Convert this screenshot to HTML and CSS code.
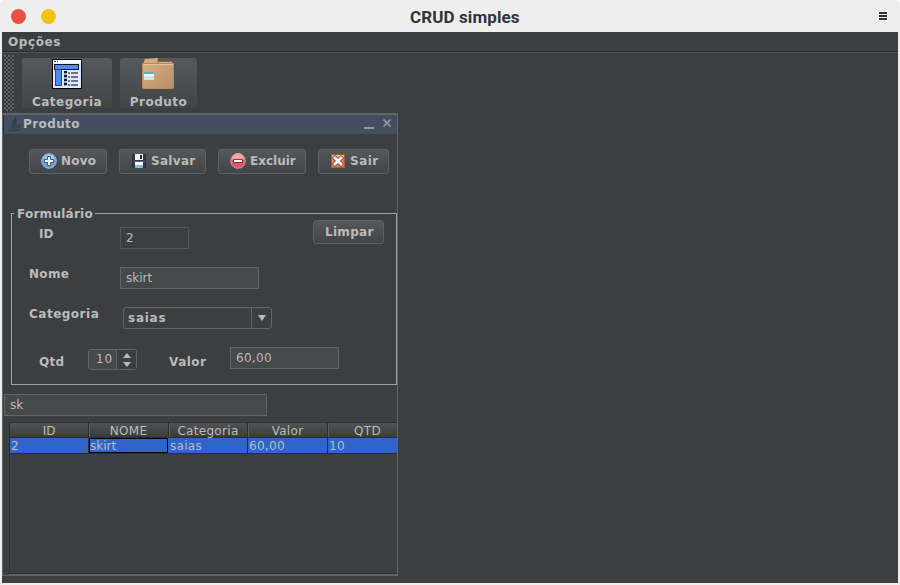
FILE: index.html
```html
<!DOCTYPE html>
<html lang="pt-BR">
<head>
<meta charset="utf-8">
<title>CRUD simples</title>
<link rel="stylesheet" href="styles.css">
</head>
<body>
<div class="window">
  <header class="titlebar">
    <span class="dot red"></span><span class="dot yellow"></span>
    <h1>CRUD simples</h1>
    <svg class="burger" width="9" height="8" viewBox="0 0 9 8"><path d="M0 0h8v2H0zM0 3h8v2H0zM0 6h8v2H0z" fill="#2f343a"/></svg>
  </header>
  <div class="client">
    <nav class="menubar"><span>Opções</span></nav>
    <div class="toolbar">
      <span class="grip"></span>
      <button class="tool cat">
        <svg width="30" height="30" viewBox="0 0 30 30" shape-rendering="crispEdges"><rect x=".5" y=".5" width="29" height="29" fill="#deebfc" stroke="#000"/><path d="M1 1h28v3H1z" fill="#f4f8ff"/><path d="M2 2h2v1H2zM5 2h1v1H5z" fill="#333"/><path d="M2.500 5.500h24v5h-24z" fill="#5089fa" stroke="#07122d"/><path d="M3.500 10.500h6v16h-6z" fill="#5089fa" stroke="#25477f"/><path d="M12 12h3v15h-3z" fill="#9aa8c0"/><path d="M12 12h3v2h-3zM12 16h3v2h-3zM12 20h3v2h-3zM12 24h3v2h-3z" fill="#101828"/><path d="M16 13h2v2h-2zM16 17h2v2h-2zM16 21h2v2h-2zM16 25h2v2h-2zM19 13h7v2h-7zM19 17h7v2h-7zM19 21h7v2h-7zM19 25h7v2h-7z" fill="#6d7584"/></svg>
        <span>Categoria</span>
      </button>
      <button class="tool prod">
        <svg width="32" height="32" viewBox="0 0 32 32"><defs><linearGradient id="box" x2="1" y2="1"><stop stop-color="#d9ad83"/><stop offset="1" stop-color="#b98f68"/></linearGradient></defs><path d="M1 6 3 1l13-1v3h13l2 3z" fill="#d6ab82"/><path d="M16 .5v4M16 3.500h13" fill="none" stroke="#8a6344"/><path d="M.5 5.500h31v24q0 1-1 1h-29q-1 0-1-1z" fill="url(#box)" stroke="#b58a64"/><path d="M1 6.500h30" stroke="#e9c39c"/><path d="M2 14h10v2H2z" fill="#57b3b5"/><path d="M2 16h10v2H2z" fill="#f4fbfa"/><path d="M2 18h10v4H2z" fill="#d3e4e5"/></svg>
        <span>Produto</span>
      </button>
    </div>
    <main class="frame">
      <div class="frame-title">
        <svg width="13" height="15" viewBox="0 0 13 15" fill="none" stroke="#303946" stroke-width="1.200"><path d="M7 0q2 2-1 4t1 4M9 4Q6 5 8 7M3 8.500q3 1.500 6 0M3 10.500q3 1.500 6 0M10 8q3 0 0 2.500M1 12q-1 1.500 5 1.500t6-1.500"/></svg>
        <span>Produto</span>
        <svg class="controls" width="28" height="10" viewBox="0 0 28 10"><path d="M0 8h10v2H0z" fill="#999c9f"/><path d="m19.500.5 7 7m0-7-7 7" stroke="#999c9f" stroke-width="1.700"/></svg>
      </div>
      <div class="actions">
        <button class="btn novo"><svg width="16" height="16" viewBox="0 0 16 16"><circle cx="8" cy="8" r="7.300" fill="#6c9fd4" stroke="#93b9df"/><path d="M2 6a6.300 6.300 0 0 1 12 0q-5 3-12 0z" fill="#a5c7e8"/><path d="M6.500 3.500h3v3h3v3h-3v3h-3v-3h-3v-3h3z" fill="#fff" stroke="#315b94"/></svg>Novo</button>
        <button class="btn salvar"><svg width="14" height="14" viewBox="0 0 14 14"><path d="M.5.5h13v13H.5z" fill="#313946" stroke="#29303b"/><path d="M3 0h8v6H3z" fill="#edf0f5"/><path d="M8 1h2v4H8z" fill="#29303c"/><path d="M1 7h12v1H1z" fill="#536277"/><path d="M3 8h8v3H3z" fill="#fff"/><path d="M3 11h8v3H3z" fill="#83bae5"/></svg>Salvar</button>
        <button class="btn excluir"><svg width="16" height="16" viewBox="0 0 16 16"><circle cx="8" cy="8" r="7.300" fill="#d95760" stroke="#e88790"/><path d="M1.500 6.500a6.500 6.500 0 0 1 13 0q-6 2-13 0z" fill="#efa4a9"/><path d="M3.500 6.500h9v3h-9z" fill="#fff" stroke="#a62b35"/></svg>Excluir</button>
        <button class="btn sair"><svg width="14" height="14" viewBox="0 0 14 14"><path d="M.5.5h13v13H.5z" fill="#e08a43" stroke="#c05a1c"/><path d="M1 1h12v4H1z" fill="#f3c27e"/><path d="m4 4 6 6m0-6-6 6" stroke="#8a4a4a" stroke-width="4.600" stroke-linecap="square"/><path d="m4 4 6 6m0-6-6 6" stroke="#f4f4fc" stroke-width="2.800" stroke-linecap="square"/></svg>Sair</button>
      </div>
      <section class="group">
        <h2>Formulário</h2>
        <div class="row r-id"><label>ID</label><span class="field off">2</span><button class="btn limpar">Limpar</button></div>
        <div class="row r-nome"><label>Nome</label><span class="field">skirt</span></div>
        <div class="row r-cat"><label>Categoria</label><span class="combo"><b>saias</b><i><svg width="8" height="6"><path d="M0 0h8L4 6z" fill="#bbb"/></svg></i></span></div>
        <div class="row r-qtd"><label>Qtd</label><span class="spinner"><b>10</b><i><svg width="8" height="14"><path d="M0 5h8L4 0zM0 9h8l-4 5z" fill="#bbb"/></svg></i></span><label class="valor">Valor</label><span class="field money">60,00</span></div>
      </section>
      <div class="search">sk</div>
      <div class="scroll">
        <div class="line head"><span>ID</span><span>NOME</span><span>Categoria</span><span>Valor</span><span>QTD</span></div>
        <div class="line data"><span>2</span><span class="focus">skirt</span><span>saias</span><span>60,00</span><span>10</span></div>
      </div>
    </main>
  </div>
</div>
</body>
</html>
```
FILE: styles.css
```css
* { box-sizing: border-box; }
body { margin: 0; background: #fff; font: bold 12px/14px "DejaVu Sans", sans-serif; letter-spacing: .5px; color: #bbb; }
button { margin: 0; font: inherit; letter-spacing: inherit; color: inherit; }
svg { display: block; flex: none; }
h1, h2 { margin: 0; }
.window { width: 900px; height: 585px; padding: 0 2px 2px; background: #eee; border-radius: 5px 5px 0 0; overflow: hidden; }
.titlebar { display: flex; align-items: center; height: 32px; padding: 0 10px 0 9px; }
.dot { width: 15px; height: 15px; border-radius: 50%; margin-right: 15px; }
.red { background: #e9503f; }
.yellow { background: #f1c40f; }
h1 { margin: 1px 0 0 339px; font: bold 17px/20px Roboto, sans-serif; letter-spacing: .1px; color: #2f343f; white-space: nowrap; }
.burger { margin-left: auto; }
.client { height: 551px; background: #3c3f41; }
.menubar { height: 21px; padding: 3px 6px; border-bottom: 1px solid #555; box-shadow: inset 0 -1px #282828; letter-spacing: .6px; }
.toolbar { display: flex; height: 60px; padding: 2px 1px; }
.grip { width: 10px; height: 56px; margin: 0 9px 0 1px; background: radial-gradient(circle at 1px 1px, #696c6e 0 .7px, transparent .8px) 0 0 / 4px 4px, radial-gradient(circle at 1px 1px, #696c6e 0 .7px, transparent .8px) 2px 2px / 4px 4px, #303335; }
.tool { display: flex; flex-direction: column; align-items: center; height: 50px; margin: 3px 8px 0 0; padding: 1px 0 0; border: 0; border-radius: 3px; background: linear-gradient(#55595b, #414547); }
.tool.cat { width: 90px; margin-left: -1px; }
.tool.prod { width: 77px; padding: 0 2px 0 0; }
.tool span { margin-top: 6px; }
.tool.prod span { margin: 5px -2px 0 0; }
.frame { width: 396px; height: 463px; border: 1px solid #616365; border-top-width: 2px; overflow: hidden; }
.frame-title { display: flex; height: 19px; padding: 2px 5px 2px 4px; background: #434e60; border-left: 1px solid #292c2e; letter-spacing: .4px; }
.frame-title span { margin-left: 2px; }
.frame-title .controls { margin: 2px 0 0 auto; }
.actions { display: flex; gap: 12px; padding: 15px 0 0 26px; height: 79px; }
.btn { display: flex; align-items: center; height: 25px; padding: 0 0 1px 11px; border: 1px solid #5e6163; border-radius: 3px; background: linear-gradient(#54585a, #414547); white-space: nowrap; }
.btn svg { margin-right: 4px; }
.novo { width: 78px; letter-spacing: .2px; }
.salvar { width: 87px; padding-left: 12px; letter-spacing: .3px; }
.excluir { width: 88px; letter-spacing: 0; }
.sair { width: 71px; padding-left: 12px; }
.salvar svg, .sair svg { margin-right: 5px; }
.group { position: relative; width: 386px; height: 172px; margin-left: 8px; padding-top: 6px; border: 1px solid #a0a3a4; }
h2 { position: absolute; left: 2px; top: -7px; padding: 0 2px 0 3px; background: #3c3f41; font: inherit; letter-spacing: .25px; }
.row { display: flex; height: 40px; align-items: flex-start; }
.row label { width: 91px; padding-left: 17px; white-space: nowrap; }
.field, .search { font-weight: normal; letter-spacing: 0; background: #45494a; border: 1px solid #646464; height: 22px; padding: 3px 5px; }
.money { letter-spacing: .3px; }
.r-id { height: 47px; }
.r-id label { padding: 7px 0 0 27px; width: 108px; letter-spacing: 0; }
.r-id .field { width: 69px; margin-top: 7px; }
.off { background: #3c3f41; border-color: #555; }
.limpar { width: 71px; height: 24px; margin-left: 124px; letter-spacing: .3px; }
.row.r-nome label, .row.r-cat label { width: 108px; }
.r-nome { letter-spacing: .3px; }
.r-nome .field { width: 139px; }
.combo { display: flex; width: 149px; height: 22px; margin-left: 3px; border: 1px solid #646464; border-radius: 3px; }
.combo b { flex: 1; padding: 3px 4px; letter-spacing: .75px; }
.combo i { display: flex; align-items: center; justify-content: center; width: 20px; border-left: 1px solid #646464; }
.row.r-qtd label { width: 76px; padding: 8px 0 0 27px; letter-spacing: .3px; }
.spinner { display: flex; width: 49px; height: 21px; margin-top: 2px; border: 1px solid #646464; border-radius: 3px; background: #45494a; }
.spinner b { width: 27px; padding: 2px 0 0 7px; font-weight: normal; letter-spacing: .8px; }
.spinner i { flex: 1; display: flex; align-items: center; justify-content: center; border-left: 1px solid #646464; background: #3c3f41; }
.row.r-qtd .valor { width: 93px; padding-left: 32px; letter-spacing: .5px; }
.r-qtd .field { width: 109px; }
.search { width: 263px; margin: 9px 0 0 1px; }
.scroll { width: 390px; height: 152px; margin: 6px 0 0 6px; border: solid #2b2d2f; border-width: 1px 0 1px 1px; box-shadow: 0 1px #616365; }
.line { display: grid; grid-template-columns: 79px 80px 79px 80px 80px; font-weight: normal; letter-spacing: .3px; line-height: 16px; height: 15px; }
.head { text-align: center; background: linear-gradient(#505355, #393b3d); border-bottom: 1px solid #2b2d2f; }
.head span { border-right: 1px solid #2b2d2f; box-shadow: 1px 0 #5c5f61; height: 14px; }
.head span:first-child { letter-spacing: -.2px; }
.data { height: 16px; background: #2f65ca; border-bottom: 1px solid #2b2d2f; }
.data span { height: 15px; padding-left: 1px; border-right: 1px solid #2b2d2f; }
.data .focus { border: 1px solid #000; padding: 0; line-height: 14px; margin-right: 1px; letter-spacing: 0; }
```
